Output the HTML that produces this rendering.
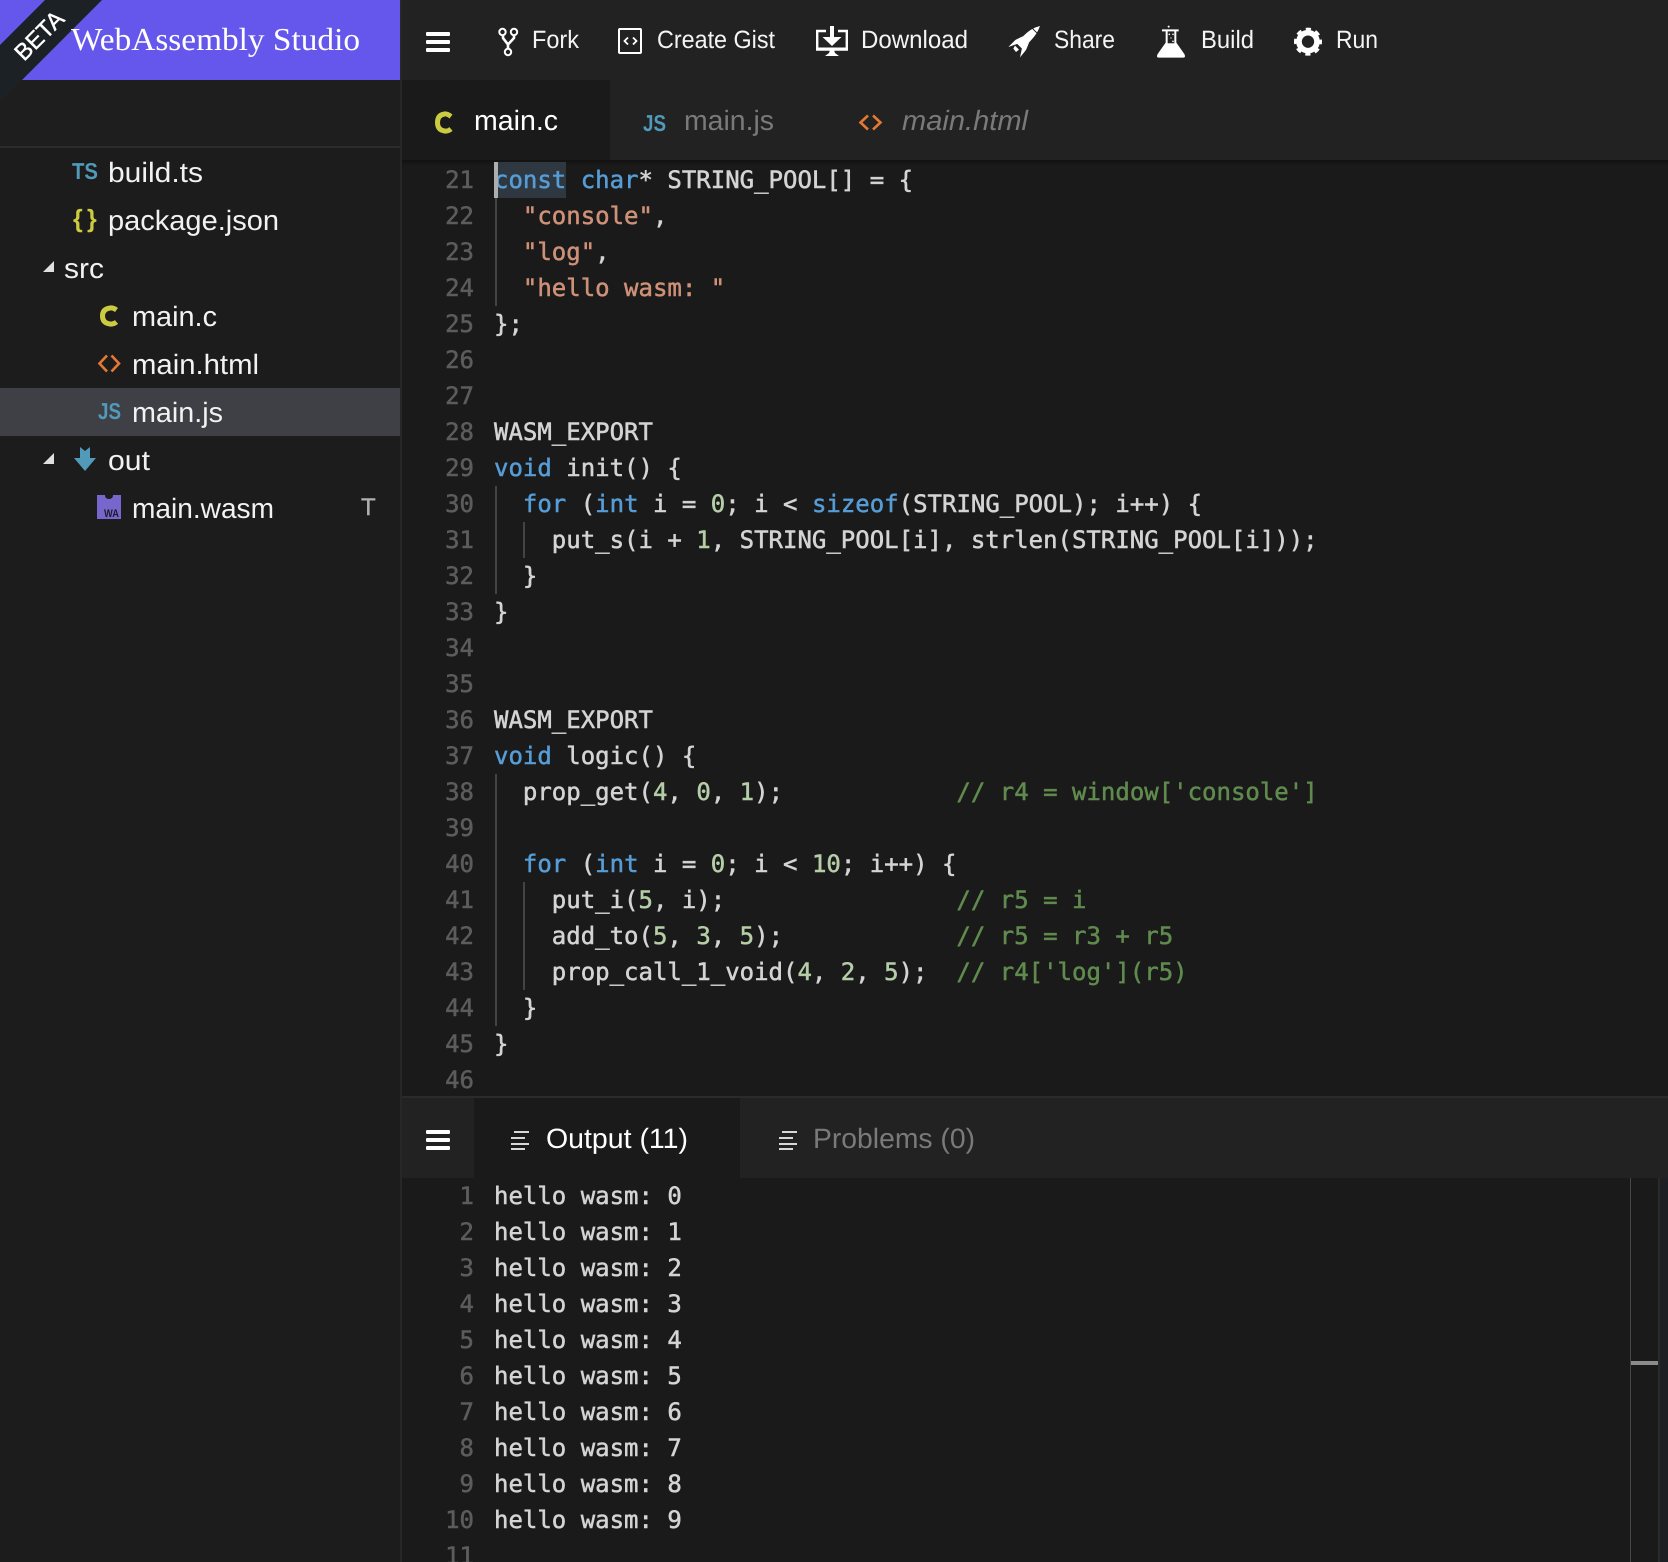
<!DOCTYPE html>
<html><head><meta charset="utf-8"><style>
*{box-sizing:border-box}
html,body{margin:0;padding:0;background:#1a1a1a;width:1668px;height:1562px;overflow:hidden}
#w{position:relative;width:1668px;height:1562px;overflow:hidden}
.a{position:absolute}
.code{position:absolute;left:0;width:1630px;height:36px;font:24px/36px "DejaVu Sans Mono","Liberation Mono",monospace;color:#d4d4d4;white-space:pre;text-rendering:geometricPrecision;-webkit-text-stroke:.5px currentColor}
.code b{position:absolute;right:auto;left:404px;width:70px;text-align:right;font-weight:normal;color:#5c5c5c;top:0}
.code i{position:absolute;left:494px;top:0;font-style:normal}
.k{color:#569cd6}.s{color:#ce9178}.n{color:#b5cea8}.c{color:#608b4e}
svg{position:absolute;left:0;top:0}
svg text{font-family:"Liberation Sans",sans-serif;text-rendering:geometricPrecision}
</style></head><body><div id="w">
<div class="a" style="left:0;top:0;width:1668px;height:80px;background:#222"></div>
<div class="a" style="left:0;top:0;width:400px;height:80px;background:#6556ec"></div>
<div class="a" style="left:0;top:80px;width:400px;height:66px;background:#1e1e1e"></div>
<div class="a" style="left:0;top:146px;width:400px;height:2px;background:#2b2b2b"></div>
<div class="a" style="left:0;top:148px;width:400px;height:1414px;background:#1c1c1d"></div>
<div class="a" style="left:0;top:388px;width:400px;height:48px;background:#3f4045"></div>
<div class="a" style="left:400px;top:0;width:2px;height:1562px;background:#272727"></div>
<div class="a" style="left:402px;top:80px;width:1266px;height:80px;background:#222"></div>
<div class="a" style="left:402px;top:80px;width:208px;height:80px;background:#1a1a1a"></div>
<div class="a" style="left:610px;top:80px;width:1px;height:80px;background:#1f2122"></div>
<div class="a" style="left:828px;top:80px;width:1px;height:80px;background:#1f2122"></div>
<div class="a" style="left:402px;top:160px;width:1266px;height:6px;background:linear-gradient(#111,#1a1a1a)"></div>
<div class="a" style="left:494px;top:162px;width:72px;height:36px;background:#2f3740"></div>
<div class="a" style="left:402px;top:1096px;width:1266px;height:2px;background:#2b2b2b"></div>
<div class="a" style="left:402px;top:1098px;width:1266px;height:80px;background:#222"></div>
<div class="a" style="left:474px;top:1098px;width:266px;height:80px;background:#1a1a1a"></div>
<div class="a" style="left:1630px;top:1178px;width:1px;height:384px;background:#474747"></div>
<div class="a" style="left:1631px;top:1361px;width:27px;height:4px;background:#8c8c8c"></div>
<div class="a" style="left:1658px;top:1178px;width:2px;height:384px;background:#2a2a2a"></div>
<div class="a" style="left:1660px;top:1178px;width:8px;height:384px;background:#1c2024"></div>
<!-- indent guides -->
<div class="a" style="left:495px;top:198px;width:2px;height:108px;background:#444"></div>
<div class="a" style="left:495px;top:486px;width:2px;height:108px;background:#444"></div>
<div class="a" style="left:523px;top:522px;width:2px;height:36px;background:#444"></div>
<div class="a" style="left:495px;top:774px;width:2px;height:252px;background:#444"></div>
<div class="a" style="left:523px;top:882px;width:2px;height:108px;background:#444"></div>

<div class="code" style="top:162px"><b>21</b><i><span class="k">const</span> <span class="k">char</span>* STRING_POOL[] = {</i></div>
<div class="code" style="top:198px"><b>22</b><i>  <span class="s">"console"</span>,</i></div>
<div class="code" style="top:234px"><b>23</b><i>  <span class="s">"log"</span>,</i></div>
<div class="code" style="top:270px"><b>24</b><i>  <span class="s">"hello wasm: "</span></i></div>
<div class="code" style="top:306px"><b>25</b><i>};</i></div>
<div class="code" style="top:342px"><b>26</b></div>
<div class="code" style="top:378px"><b>27</b></div>
<div class="code" style="top:414px"><b>28</b><i>WASM_EXPORT</i></div>
<div class="code" style="top:450px"><b>29</b><i><span class="k">void</span> init() {</i></div>
<div class="code" style="top:486px"><b>30</b><i>  <span class="k">for</span> (<span class="k">int</span> i = <span class="n">0</span>; i &lt; <span class="k">sizeof</span>(STRING_POOL); i++) {</i></div>
<div class="code" style="top:522px"><b>31</b><i>    put_s(i + <span class="n">1</span>, STRING_POOL[i], strlen(STRING_POOL[i]));</i></div>
<div class="code" style="top:558px"><b>32</b><i>  }</i></div>
<div class="code" style="top:594px"><b>33</b><i>}</i></div>
<div class="code" style="top:630px"><b>34</b></div>
<div class="code" style="top:666px"><b>35</b></div>
<div class="code" style="top:702px"><b>36</b><i>WASM_EXPORT</i></div>
<div class="code" style="top:738px"><b>37</b><i><span class="k">void</span> logic() {</i></div>
<div class="code" style="top:774px"><b>38</b><i>  prop_get(<span class="n">4</span>, <span class="n">0</span>, <span class="n">1</span>);            <span class="c">// r4 = window['console']</span></i></div>
<div class="code" style="top:810px"><b>39</b></div>
<div class="code" style="top:846px"><b>40</b><i>  <span class="k">for</span> (<span class="k">int</span> i = <span class="n">0</span>; i &lt; <span class="n">10</span>; i++) {</i></div>
<div class="code" style="top:882px"><b>41</b><i>    put_i(<span class="n">5</span>, i);                <span class="c">// r5 = i</span></i></div>
<div class="code" style="top:918px"><b>42</b><i>    add_to(<span class="n">5</span>, <span class="n">3</span>, <span class="n">5</span>);            <span class="c">// r5 = r3 + r5</span></i></div>
<div class="code" style="top:954px"><b>43</b><i>    prop_call_1_void(<span class="n">4</span>, <span class="n">2</span>, <span class="n">5</span>);  <span class="c">// r4['log'](r5)</span></i></div>
<div class="code" style="top:990px"><b>44</b><i>  }</i></div>
<div class="code" style="top:1026px"><b>45</b><i>}</i></div>
<div class="code" style="top:1062px;height:34px;overflow:hidden"><b>46</b></div>

<div class="code" style="top:1178px"><b>1</b><i>hello wasm: 0</i></div>
<div class="code" style="top:1214px"><b>2</b><i>hello wasm: 1</i></div>
<div class="code" style="top:1250px"><b>3</b><i>hello wasm: 2</i></div>
<div class="code" style="top:1286px"><b>4</b><i>hello wasm: 3</i></div>
<div class="code" style="top:1322px"><b>5</b><i>hello wasm: 4</i></div>
<div class="code" style="top:1358px"><b>6</b><i>hello wasm: 5</i></div>
<div class="code" style="top:1394px"><b>7</b><i>hello wasm: 6</i></div>
<div class="code" style="top:1430px"><b>8</b><i>hello wasm: 7</i></div>
<div class="code" style="top:1466px"><b>9</b><i>hello wasm: 8</i></div>
<div class="code" style="top:1502px"><b>10</b><i>hello wasm: 9</i></div>
<div class="code" style="top:1538px;height:24px;overflow:hidden"><b>11</b></div>
<div class="a" style="left:494px;top:162px;width:4px;height:36px;background:#aeafad"></div>

<svg width="1668" height="1562" viewBox="0 0 1668 1562">
<!-- ribbon -->
<polygon points="45,0 102,0 0,102 0,45" fill="#1c2125"/>
<text transform="translate(24,62) rotate(-45)" font-size="23.500" fill="#fff" stroke="#fff" stroke-width=".4" textLength="59" lengthAdjust="spacingAndGlyphs">BETA</text>
<text x="71" y="50" style="font-family:'Liberation Serif',serif" font-size="32" fill="#fff" textLength="289" lengthAdjust="spacingAndGlyphs">WebAssembly Studio</text>

<!-- toolbar -->
<g fill="#fff">
<rect x="426" y="32" width="24" height="4" rx="1"/><rect x="426" y="40" width="24" height="4" rx="1"/><rect x="426" y="48" width="24" height="4" rx="1"/>
<rect x="426" y="1130" width="24" height="4" rx="1"/><rect x="426" y="1138" width="24" height="4" rx="1"/><rect x="426" y="1146" width="24" height="4" rx="1"/>
</g>
<g fill="none" stroke="#fff" stroke-width="2">
<circle cx="502.500" cy="32" r="3.200"/><circle cx="514" cy="32" r="3.200"/><circle cx="508" cy="52" r="3.200"/>
<path stroke-width="2.600" d="M503 35.500L503 38L508 44.500L514 38L514 35.500M508 44L508 48.500"/>
<rect x="619" y="29" width="22" height="24" rx="1"/>
<path stroke-width="1.800" d="M628 37.500L624.500 41L628 44.500M633 37.500L636.500 41L633 44.500"/>
<path stroke-width="2.400" d="M826 31H817.200V49.500H846.800V31H838"/>
</g>
<g fill="#fff">
<polygon points="830,26 834,26 834,37 841.500,37 832,46 822.500,37 830,37"/>
<rect x="816" y="47.500" width="32" height="3"/>
<polygon points="830,50 834,50 835,53 839,56 825,56 829,53"/>
<!-- rocket -->
<g transform="translate(900,0) scale(.33333)">
<path d="M420 78Q394 84 372 106L350 130L366 146L390 124Q412 102 420 78Z"/>
<path d="M370 108L346 120L325 141L351 132Z"/>
<path d="M388 126L378 150L360 172L366 144Z"/>
<path d="M345 137L357 149L348 156L340 146Z"/>
<path d="M397 85L413 101" stroke="#222" stroke-width="3" fill="none"/>
</g>
<!-- flask + gear -->
<g transform="translate(900,0) scale(.33333)">
<circle cx="806" cy="80" r="3"/>
<path d="M786 88H836V94H829V128L853 162Q859 173 848 173H778Q767 173 773 162L797 128V94H786Z M803 94V130H823V94Z" fill-rule="evenodd"/>
<circle cx="808" cy="103" r="2.500"/><circle cx="819" cy="103" r="2.500"/><circle cx="813" cy="114" r="2"/><circle cx="819" cy="124" r="2.500"/>
<path d="M800 130H826L846 164H780Z"/>
<circle cx="1224" cy="125" r="27" fill="none" stroke="#fff" stroke-width="17"/>
<circle cx="1224" cy="125" r="36" fill="none" stroke="#fff" stroke-width="12" stroke-dasharray="15 13.270" stroke-dashoffset="7.500"/>
</g>
</g>
<g font-size="25" fill="#f4f4f4">
<text x="532" y="48" textLength="47" lengthAdjust="spacingAndGlyphs">Fork</text>
<text x="657" y="48" textLength="118" lengthAdjust="spacingAndGlyphs">Create Gist</text>
<text x="861" y="48" textLength="107" lengthAdjust="spacingAndGlyphs">Download</text>
<text x="1054" y="48" textLength="61" lengthAdjust="spacingAndGlyphs">Share</text>
<text x="1201" y="48" textLength="53" lengthAdjust="spacingAndGlyphs">Build</text>
<text x="1336" y="48" textLength="42" lengthAdjust="spacingAndGlyphs">Run</text>
</g>

<!-- editor tabs -->
<g font-size="28">
<text x="474" y="130" fill="#fff" textLength="84" lengthAdjust="spacingAndGlyphs">main.c</text>
<text x="684" y="130" fill="#7a7a7a" textLength="90" lengthAdjust="spacingAndGlyphs">main.js</text>
<text x="902" y="130" fill="#7a7a7a" font-style="italic" textLength="126" lengthAdjust="spacingAndGlyphs">main.html</text>
</g>
<path d="M451 116.500Q447 113.500 444.500 114Q437.500 115 437.500 122.500Q437.500 130 444.500 131Q448 131.500 451 129" fill="none" stroke="#cbcb41" stroke-width="5"/>
<text x="643" y="131" font-size="23" font-weight="bold" fill="#519aba" textLength="23" lengthAdjust="spacingAndGlyphs">JS</text>
<path d="M868 115.500L860.500 122.500L868 129.500M873 115.500L880.500 122.500L873 129.500" fill="none" stroke="#e37933" stroke-width="2.600"/>

<!-- tree -->
<g font-size="28" fill="#f2f2f2">
<text x="108" y="182" textLength="95" lengthAdjust="spacingAndGlyphs">build.ts</text>
<text x="108" y="230" textLength="171" lengthAdjust="spacingAndGlyphs">package.json</text>
<text x="64" y="278" textLength="40" lengthAdjust="spacingAndGlyphs">src</text>
<text x="132" y="326" textLength="85" lengthAdjust="spacingAndGlyphs">main.c</text>
<text x="132" y="374" textLength="127" lengthAdjust="spacingAndGlyphs">main.html</text>
<text x="132" y="422" textLength="91" lengthAdjust="spacingAndGlyphs">main.js</text>
<text x="108" y="470" textLength="42" lengthAdjust="spacingAndGlyphs">out</text>
<text x="132" y="518" textLength="142" lengthAdjust="spacingAndGlyphs">main.wasm</text>
</g>
<text x="361" y="515" font-size="24" fill="#b0b0b0" stroke="#b0b0b0" stroke-width=".4">T</text>
<text x="72" y="179" font-size="23" font-weight="bold" fill="#519aba" textLength="26" lengthAdjust="spacingAndGlyphs">TS</text>
<text x="73" y="227" font-size="25" font-weight="bold" fill="#cbcb41">{</text>
<text x="87" y="227" font-size="25" font-weight="bold" fill="#cbcb41">}</text>
<path d="M116.500 310Q113 307.500 110 308Q102.500 309 102.500 316Q102.500 323 110 324Q113.500 324.500 116.500 322" fill="none" stroke="#cbcb41" stroke-width="5"/>
<path d="M107 355.500L99.500 363.500L107 371.500M111.500 355.500L119 363.500L111.500 371.500" fill="none" stroke="#e37933" stroke-width="2.600"/>
<text x="98" y="419" font-size="23" font-weight="bold" fill="#519aba" textLength="23" lengthAdjust="spacingAndGlyphs">JS</text>
<polygon points="43,272 54,272 54,261" fill="#e0e0e0"/>
<polygon points="43,464 54,464 54,453" fill="#e0e0e0"/>
<polygon points="80,447 85,451 90,447 90,458 96,458 85,471 74,458 80,458" fill="#519aba"/>
<path d="M97 495H105Q105 499 109 499Q113 499 113 495H121V519H97Z" fill="#7766cc"/>
<text x="104" y="517" font-size="11" font-weight="bold" fill="#1c1c2a" textLength="15" lengthAdjust="spacingAndGlyphs">WA</text>

<!-- bottom tabs -->
<g fill="#d8d8d8">
<rect x="514" y="1131" width="15" height="2"/><rect x="511" y="1137" width="14" height="2"/><rect x="511" y="1143" width="18" height="2"/><rect x="511" y="1148" width="14" height="2"/>
<rect x="782" y="1131" width="15" height="2"/><rect x="779" y="1137" width="14" height="2"/><rect x="779" y="1143" width="18" height="2"/><rect x="779" y="1148" width="14" height="2"/>
</g>
<g font-size="28">
<text x="546" y="1148" fill="#fff" textLength="142" lengthAdjust="spacingAndGlyphs">Output (11)</text>
<text x="813" y="1148" fill="#7a7a7a" textLength="162" lengthAdjust="spacingAndGlyphs">Problems (0)</text>
</g>
</svg>
</div></body></html>
